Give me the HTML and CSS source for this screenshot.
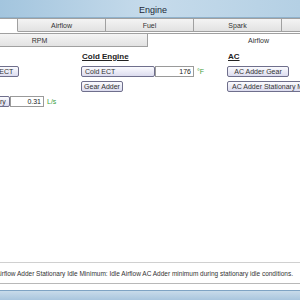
FILE: index.html
```html
<!DOCTYPE html>
<html lang="en">
<head>
<meta charset="UTF-8">
<title>Engine</title>
<link rel="stylesheet" href="styles.css">
</head>
<body>
  <div class="window">
    <div class="titlebar">Engine</div>

    <div class="tabs tabs-top">
      <div class="tab selected">Idle</div>
      <div class="tab">Airflow</div>
      <div class="tab">Fuel</div>
      <div class="tab">Spark</div>
      <div class="tab">Torque</div>
    </div>
    <div class="tabs tabs-sub">
      <div class="tab wide">RPM</div>
      <div class="tab wide selected">Airflow</div>
    </div>

    <div class="content">
      <div class="group group-left">
        <div class="heading">Warm</div>
        <div class="row"><button class="btn btn-left warm">Warm ECT</button></div>
        <div class="row"></div>
        <div class="row">
          <button class="btn w40">Stationary</button>
          <input class="field" value="0.31" readonly>
          <span class="unit">L/s</span>
        </div>
      </div>

      <div class="group group-mid">
        <div class="heading">Cold Engine</div>
        <div class="row">
          <button class="btn btn-left w74">Cold ECT</button>
          <input class="field" value="176" readonly>
          <span class="unit">°F</span>
        </div>
        <div class="row"><button class="btn w41">Gear Adder</button></div>
      </div>

      <div class="group group-ac">
        <div class="heading">AC</div>
        <div class="row"><button class="btn w62">AC Adder Gear</button></div>
        <div class="row"><button class="btn btn-left w120">AC Adder Stationary Minimum</button></div>
      </div>
    </div>

    <div class="status">
      <span>Airflow Adder Stationary Idle Minimum: Idle Airflow AC Adder minimum during stationary idle conditions.</span>
    </div>
    <div class="bottombar"></div>
  </div>
</body>
</html>
```
FILE: styles.css
```css
html, body {
  margin: 0;
  padding: 0;
  width: 300px;
  height: 300px;
  overflow: hidden;
  background: #fff;
  font-family: "Liberation Sans", Arial, sans-serif;
  font-size: 7px;
  color: #222;
}
.window {
  display: flex;
  flex-direction: column;
  height: 300px;
}
.titlebar {
  height: 18px;
  display: flex;
  align-items: center;
  justify-content: center;
  padding-left: 6px;
  padding-top: 2px;
  box-sizing: border-box;
  font-size: 9px;
  color: #1e2a38;
  background: linear-gradient(to right, #a3c5de, #c6dbeb 50%, #b4d0e4);
  border-bottom: 1px solid #8fb1cb;
}
.tabs {
  display: flex;
  flex-shrink: 0;
  height: 14px;
}
.tabs-top {
  margin-left: -70px;
}
.tabs-sub {
  margin-left: -68px;
  margin-top: 1px;
}
.tab {
  flex: 0 0 88px;
  box-sizing: border-box;
  display: flex;
  align-items: center;
  justify-content: center;
  background: linear-gradient(#f4f4f4, #e2e2e2);
  border: 1px solid #a0a0a0;
  border-left: none;
  color: #333;
}
.tab.wide {
  flex: 0 0 216px;
}
.tab.wide.selected {
  flex: 0 0 222px;
}
.tab.selected {
  background: #fff;
  border-bottom-color: #fff;
}
.content {
  flex: 1;
  display: flex;
  padding-top: 5px;
  margin-left: -30px;
}
.group {
  flex-shrink: 0;
  display: flex;
  flex-direction: column;
  gap: 4px;
}
.group-left {
  width: 111px;
}
.group-mid {
  width: 146px;
}
.heading {
  height: 9px;
  font-weight: bold;
  text-decoration: underline;
  font-size: 8px;
  margin-bottom: 1px;
  padding-left: 1px;
  color: #222;
}
.group-left .heading {
  visibility: hidden;
}
.row {
  display: flex;
  align-items: center;
  height: 11px;
}
.btn {
  height: 11px;
  box-sizing: border-box;
  padding: 0 2px;
  font: inherit;
  color: #333;
  background: linear-gradient(#fbfbfe, #dcdcef);
  border: 1px solid #6f6f8c;
  border-radius: 2px;
  white-space: nowrap;
  overflow: hidden;
  flex-shrink: 0;
}
.btn-left {
  text-align: left;
  padding-left: 3px;
}
.warm { width: 49px; padding-left: 8px; }
.w40 { width: 40px; }
.w74 { width: 74px; }
.w41 { width: 42px; }
.w62 { width: 62px; }
.w120 { width: 130px; padding-left: 4px; }
.field {
  width: 34px;
  height: 11px;
  box-sizing: border-box;
  padding: 0 2px;
  font: inherit;
  color: #222;
  text-align: right;
  border: 1px solid #9a9a9a;
  background: #fff;
}
.group-mid .field {
  width: 39px;
}
.unit {
  margin-left: 3px;
  color: #3aa03a;
}
.status {
  height: 20px;
  flex-shrink: 0;
  display: flex;
  align-items: center;
  margin-left: -4px;
  margin-bottom: 6px;
  border-top: 1px solid #d0d0d0;
  border-bottom: 1px solid #b8b8b8;
  white-space: nowrap;
  font-size: 6.5px;
  color: #333;
}
.bottombar {
  height: 9px;
  flex-shrink: 0;
  border-top: 1px solid #7fa4c4;
  background: linear-gradient(#c8dbea, #a9c6de);
}
```
